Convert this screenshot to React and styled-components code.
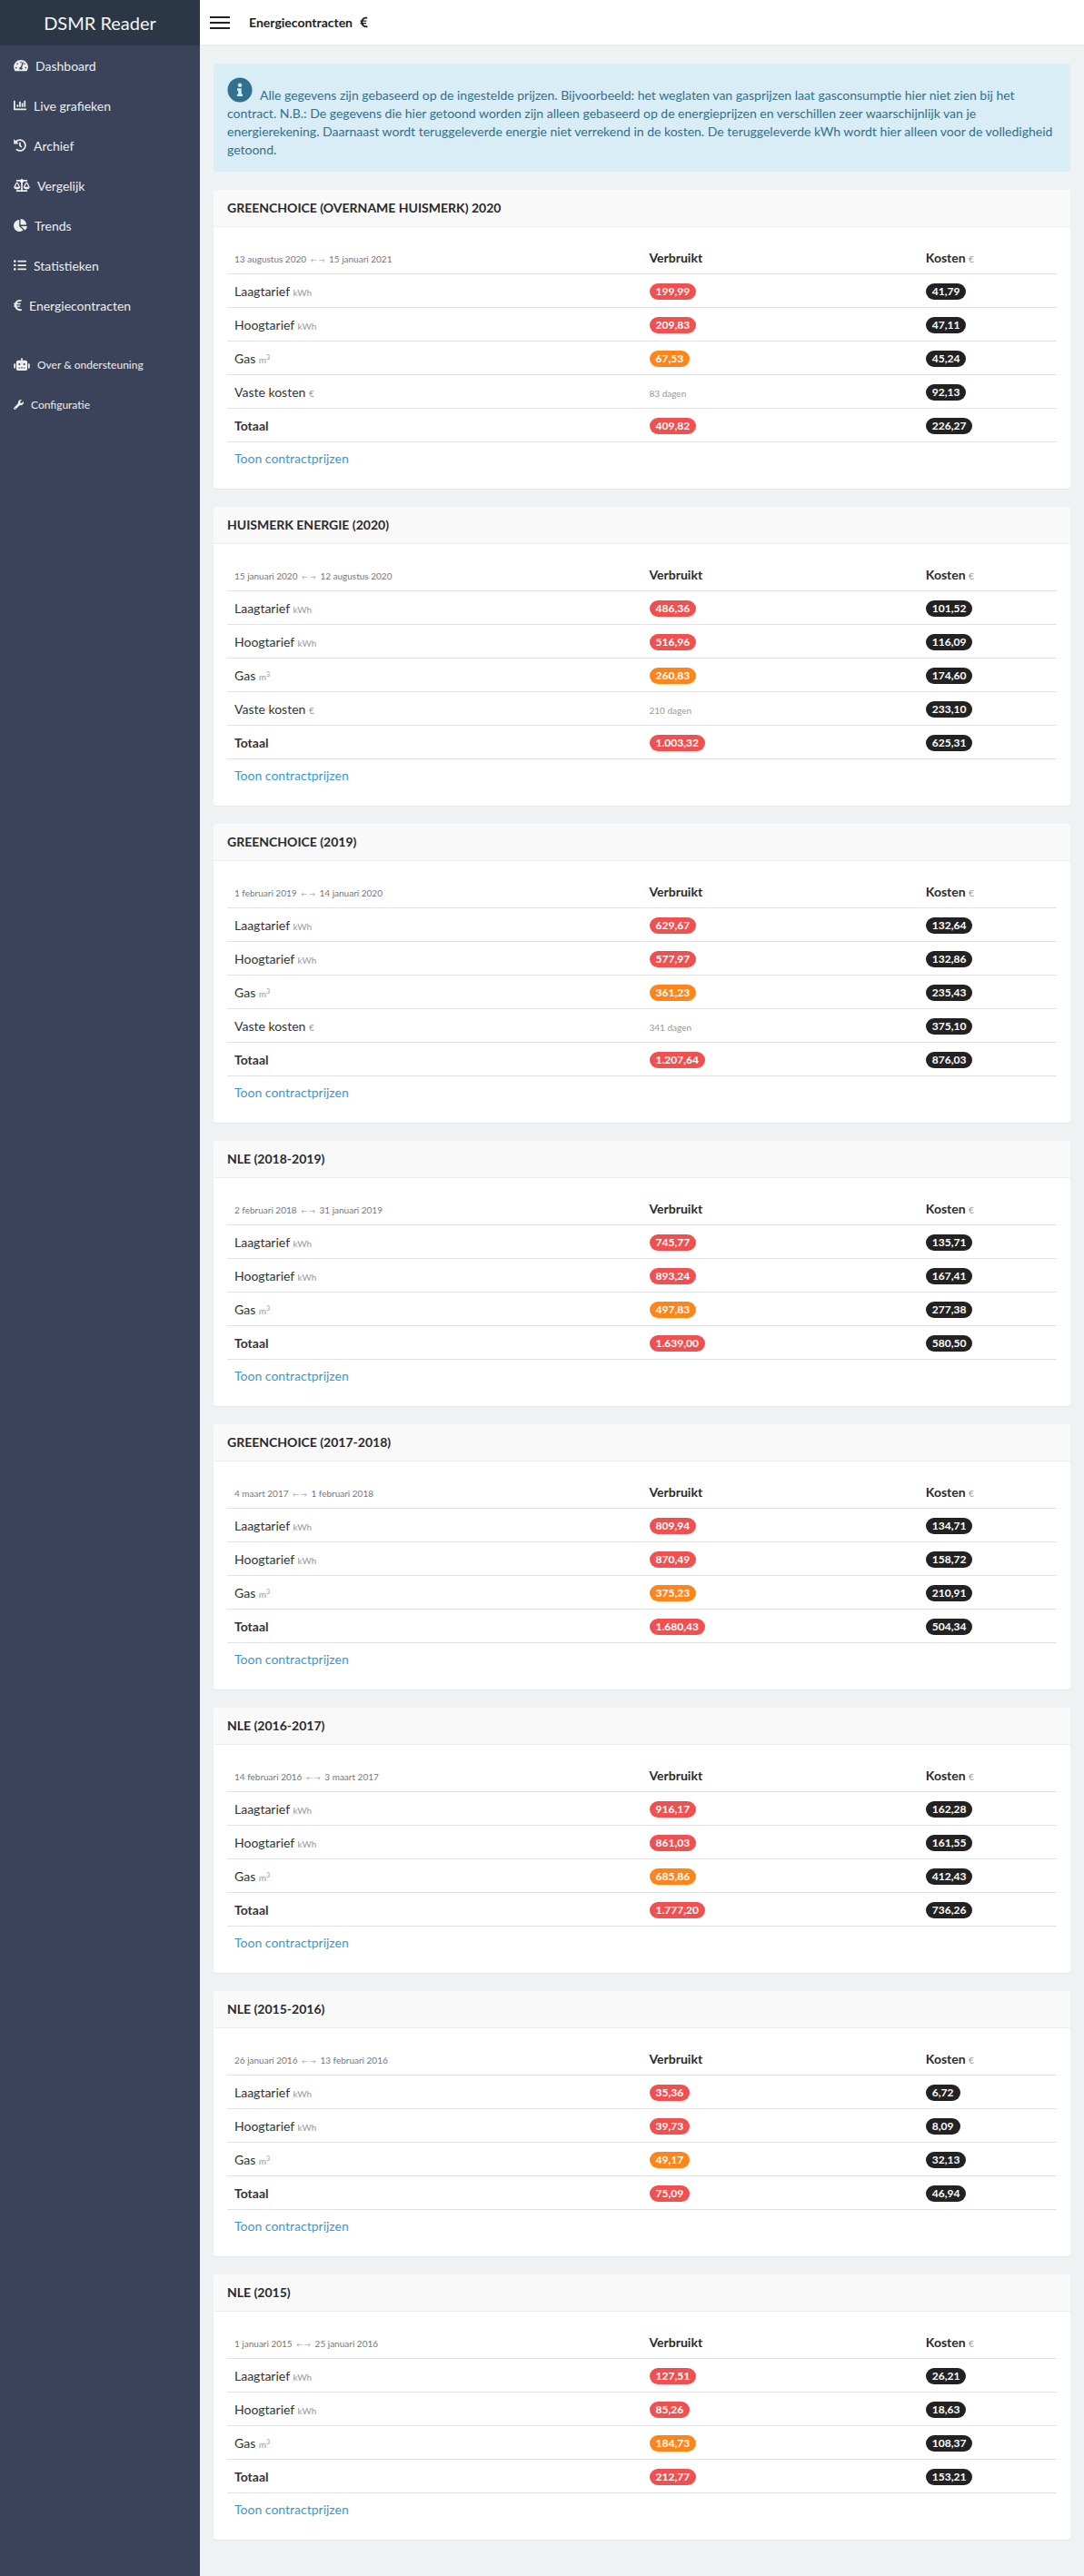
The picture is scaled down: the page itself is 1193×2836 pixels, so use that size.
import React from "react";
import styled, { createGlobalStyle } from "styled-components";
import {
  FaTachometerAlt,
  FaChartBar,
  FaHistory,
  FaBalanceScale,
  FaChartPie,
  FaListUl,
  FaEuroSign,
  FaRobot,
  FaWrench,
  FaInfoCircle,
} from "react-icons/fa";

const mainMenu = [
  { label: "Dashboard", icon: FaTachometerAlt, iconWidth: 16 },
  { label: "Live grafieken", icon: FaChartBar, iconWidth: 14 },
  { label: "Archief", icon: FaHistory, iconWidth: 14 },
  { label: "Vergelijk", icon: FaBalanceScale, iconWidth: 18 },
  { label: "Trends", icon: FaChartPie, iconWidth: 15 },
  { label: "Statistieken", icon: FaListUl, iconWidth: 14 },
  { label: "Energiecontracten", icon: FaEuroSign, iconWidth: 9 },
];

const contracts = [
  {
    title: "Greenchoice (overname Huismerk) 2020",
    from: "13 augustus 2020",
    to: "15 januari 2021",
    low: ["199,99", "41,79"],
    high: ["209,83", "47,11"],
    gas: ["67,53", "45,24"],
    fixed: ["83 dagen", "92,13"],
    total: ["409,82", "226,27"],
  },
  {
    title: "Huismerk Energie (2020)",
    from: "15 januari 2020",
    to: "12 augustus 2020",
    low: ["486,36", "101,52"],
    high: ["516,96", "116,09"],
    gas: ["260,83", "174,60"],
    fixed: ["210 dagen", "233,10"],
    total: ["1.003,32", "625,31"],
  },
  {
    title: "Greenchoice (2019)",
    from: "1 februari 2019",
    to: "14 januari 2020",
    low: ["629,67", "132,64"],
    high: ["577,97", "132,86"],
    gas: ["361,23", "235,43"],
    fixed: ["341 dagen", "375,10"],
    total: ["1.207,64", "876,03"],
  },
  {
    title: "NLE (2018-2019)",
    from: "2 februari 2018",
    to: "31 januari 2019",
    low: ["745,77", "135,71"],
    high: ["893,24", "167,41"],
    gas: ["497,83", "277,38"],
    total: ["1.639,00", "580,50"],
  },
  {
    title: "Greenchoice (2017-2018)",
    from: "4 maart 2017",
    to: "1 februari 2018",
    low: ["809,94", "134,71"],
    high: ["870,49", "158,72"],
    gas: ["375,23", "210,91"],
    total: ["1.680,43", "504,34"],
  },
  {
    title: "NLE (2016-2017)",
    from: "14 februari 2016",
    to: "3 maart 2017",
    low: ["916,17", "162,28"],
    high: ["861,03", "161,55"],
    gas: ["685,86", "412,43"],
    total: ["1.777,20", "736,26"],
  },
  {
    title: "NLE (2015-2016)",
    from: "26 januari 2016",
    to: "13 februari 2016",
    low: ["35,36", "6,72"],
    high: ["39,73", "8,09"],
    gas: ["49,17", "32,13"],
    total: ["75,09", "46,94"],
  },
  {
    title: "NLE (2015)",
    from: "1 januari 2015",
    to: "25 januari 2016",
    low: ["127,51", "26,21"],
    high: ["85,26", "18,63"],
    gas: ["184,73", "108,37"],
    total: ["212,77", "153,21"],
  },
];

const GlobalStyle = createGlobalStyle`
  html, body {
    margin: 0;
    padding: 0;
    background: #eef2f3;
    font-family: Lato, "Liberation Sans", sans-serif;
    font-size: 14px;
    color: #222;
  }
  * {
    box-sizing: border-box;
  }
`;

const Layout = styled.div`
  display: grid;
  grid-template-columns: 220px 1fr;
  min-height: 100vh;
`;

const Sidebar = styled.aside`
  background: #3a4359;
  color: #eee;
`;

const Brand = styled.div`
  height: 50px;
  display: flex;
  align-items: center;
  justify-content: center;
  background: #2b3744;
  color: #f5f5f5;
  font-size: 20px;
`;

const Menu = styled.nav`
  display: flex;
  flex-direction: column;
  margin-bottom: 21px;
`;

const MenuItem = styled.a`
  height: 44px;
  padding-left: 15px;
  display: flex;
  align-items: center;
  gap: 8px;
  color: #eee;
  font-size: ${(p) => (p.$small ? "12px" : "14px")};
  svg {
    flex: none;
    width: ${(p) => p.$iconWidth}px;
    height: ${(p) => p.$iconHeight || 14}px;
  }
`;

const Main = styled.div`
  min-width: 0;
`;

const Topbar = styled.header`
  height: 50px;
  padding-left: 11px;
  display: flex;
  align-items: center;
  background: #fff;
  border-bottom: 1px solid #e9ecec;
`;

const Hamburger = styled.div`
  width: 22px;
  height: 14px;
  margin-right: 21px;
  border-top: 2px solid #222;
  border-bottom: 2px solid #222;
  position: relative;
  &::after {
    content: "";
    position: absolute;
    left: 0;
    right: 0;
    top: 4px;
    height: 2px;
    background: #222;
  }
`;

const PageTitle = styled.h1`
  margin: 0;
  font-size: 14px;
  font-weight: 700;
  display: flex;
  align-items: center;
  gap: 8px;
  svg {
    width: 9px;
    height: 13px;
  }
`;

const Content = styled.main`
  padding: 20px 15px 40px;
  display: flex;
  flex-direction: column;
  gap: 20px;
`;

const Notice = styled.div`
  height: 119px;
  padding: 15px;
  background: #d9edf7;
  border-radius: 3px;
  color: #31708f;
  font-size: 14px;
  line-height: 20px;
  svg {
    vertical-align: -3px;
    margin-right: 8px;
  }
`;

const Card = styled.section`
  background: #fff;
  border-radius: 3px;
  box-shadow: 0 1px 1px rgba(0, 0, 0, 0.05);
`;

const CardHeader = styled.h2`
  margin: 0;
  height: 41px;
  padding: 0 15px 1px;
  display: flex;
  align-items: center;
  background: #f9f9f9;
  border-bottom: 1px solid #eee;
  border-radius: 3px 3px 0 0;
  color: #2a2a2a;
  font-size: 14px;
  font-weight: 700;
  text-transform: uppercase;
`;

const CardBody = styled.div`
  padding: 15px 15px 23px;
`;

const Table = styled.table`
  width: 100%;
  border-collapse: separate;
  border-spacing: 0;
  table-layout: fixed;
  margin-bottom: 8px;
`;

const Th = styled.th`
  height: 37px;
  padding: 0 8px;
  text-align: left;
  border-bottom: 1px solid #dfe3e6;
  color: #2a2a2a;
  font-size: 14px;
  font-weight: 700;
  width: ${(p) => p.$width};
`;

const Td = styled.td`
  height: 37px;
  padding: 0 8px;
  border-bottom: 1px solid #dfe3e6;
  color: #333;
  font-size: 14px;
  font-weight: ${(p) => (p.$bold ? 700 : 400)};
`;

const Period = styled.span`
  font-size: 10px;
  font-weight: 400;
  color: #777;
`;

const Arrows = styled.span`
  margin: 0 2px;
  font-size: 7px;
  color: #999;
`;

const Unit = styled.span`
  font-size: 10px;
  font-weight: 400;
  color: #999;
  sup {
    font-size: 7px;
    line-height: 0;
  }
`;

const Days = styled.span`
  font-size: 10px;
  color: #999;
`;

const Badge = styled.span`
  display: inline-block;
  height: 18px;
  line-height: 18px;
  padding: 0 7px;
  border-radius: 9px;
  color: #fff;
  font-size: 12px;
  font-weight: 700;
  background: ${(p) => p.$color};
  vertical-align: middle;
`;

const PriceLink = styled.a`
  display: block;
  padding-left: 8px;
  line-height: 20px;
  color: #3d97cb;
  font-size: 14px;
`;

const RED = "#f05050";
const ORANGE = "#ff851b";
const BLACK = "#222";

function Row({ label, unit, values, color, bold }) {
  return (
    <tr>
      <Td $bold={bold}>
        {label} {unit && <Unit>{unit}</Unit>}
      </Td>
      <Td>
        <Badge $color={color}>{values[0]}</Badge>
      </Td>
      <Td>
        <Badge $color={BLACK}>{values[1]}</Badge>
      </Td>
    </tr>
  );
}

function ContractCard({ contract }) {
  return (
    <Card>
      <CardHeader>{contract.title}</CardHeader>
      <CardBody>
        <Table>
          <thead>
            <tr>
              <Th $width="50%">
                <Period>
                  {contract.from} <Arrows>← →</Arrows> {contract.to}
                </Period>
              </Th>
              <Th $width="33.33%">Verbruikt</Th>
              <Th $width="16.67%">
                Kosten <Unit>€</Unit>
              </Th>
            </tr>
          </thead>
          <tbody>
            <Row label="Laagtarief" unit="kWh" values={contract.low} color={RED} />
            <Row label="Hoogtarief" unit="kWh" values={contract.high} color={RED} />
            <Row
              label="Gas"
              unit={
                <>
                  m<sup>3</sup>
                </>
              }
              values={contract.gas}
              color={ORANGE}
            />
            {contract.fixed && (
              <tr>
                <Td>
                  Vaste kosten <Unit>€</Unit>
                </Td>
                <Td>
                  <Days>{contract.fixed[0]}</Days>
                </Td>
                <Td>
                  <Badge $color={BLACK}>{contract.fixed[1]}</Badge>
                </Td>
              </tr>
            )}
            <Row label="Totaal" values={contract.total} color={RED} bold />
          </tbody>
        </Table>
        <PriceLink>Toon contractprijzen</PriceLink>
      </CardBody>
    </Card>
  );
}

export default function App() {
  return (
    <Layout>
      <GlobalStyle />
      <Sidebar>
        <Brand>DSMR Reader</Brand>
        <Menu>
          {mainMenu.map(({ label, icon: Icon, iconWidth }) => (
            <MenuItem key={label} $iconWidth={iconWidth}>
              <Icon />
              {label}
            </MenuItem>
          ))}
        </Menu>
        <Menu>
          <MenuItem $small $iconWidth={18}>
            <FaRobot />
            Over &amp; ondersteuning
          </MenuItem>
          <MenuItem $small $iconWidth={11} $iconHeight={11}>
            <FaWrench />
            Configuratie
          </MenuItem>
        </Menu>
      </Sidebar>
      <Main>
        <Topbar>
          <Hamburger />
          <PageTitle>
            Energiecontracten <FaEuroSign />
          </PageTitle>
        </Topbar>
        <Content>
          <Notice>
            <FaInfoCircle size={28} />
            Alle gegevens zijn gebaseerd op de ingestelde prijzen. Bijvoorbeeld: het weglaten van
            gasprijzen laat gasconsumptie hier niet zien bij het contract. N.B.: De gegevens die
            hier getoond worden zijn alleen gebaseerd op de energieprijzen en verschillen zeer
            waarschijnlijk van je energierekening. Daarnaast wordt teruggeleverde energie niet
            verrekend in de kosten. De teruggeleverde kWh wordt hier alleen voor de volledigheid
            getoond.
          </Notice>
          {contracts.map((contract) => (
            <ContractCard key={contract.title} contract={contract} />
          ))}
        </Content>
      </Main>
    </Layout>
  );
}
